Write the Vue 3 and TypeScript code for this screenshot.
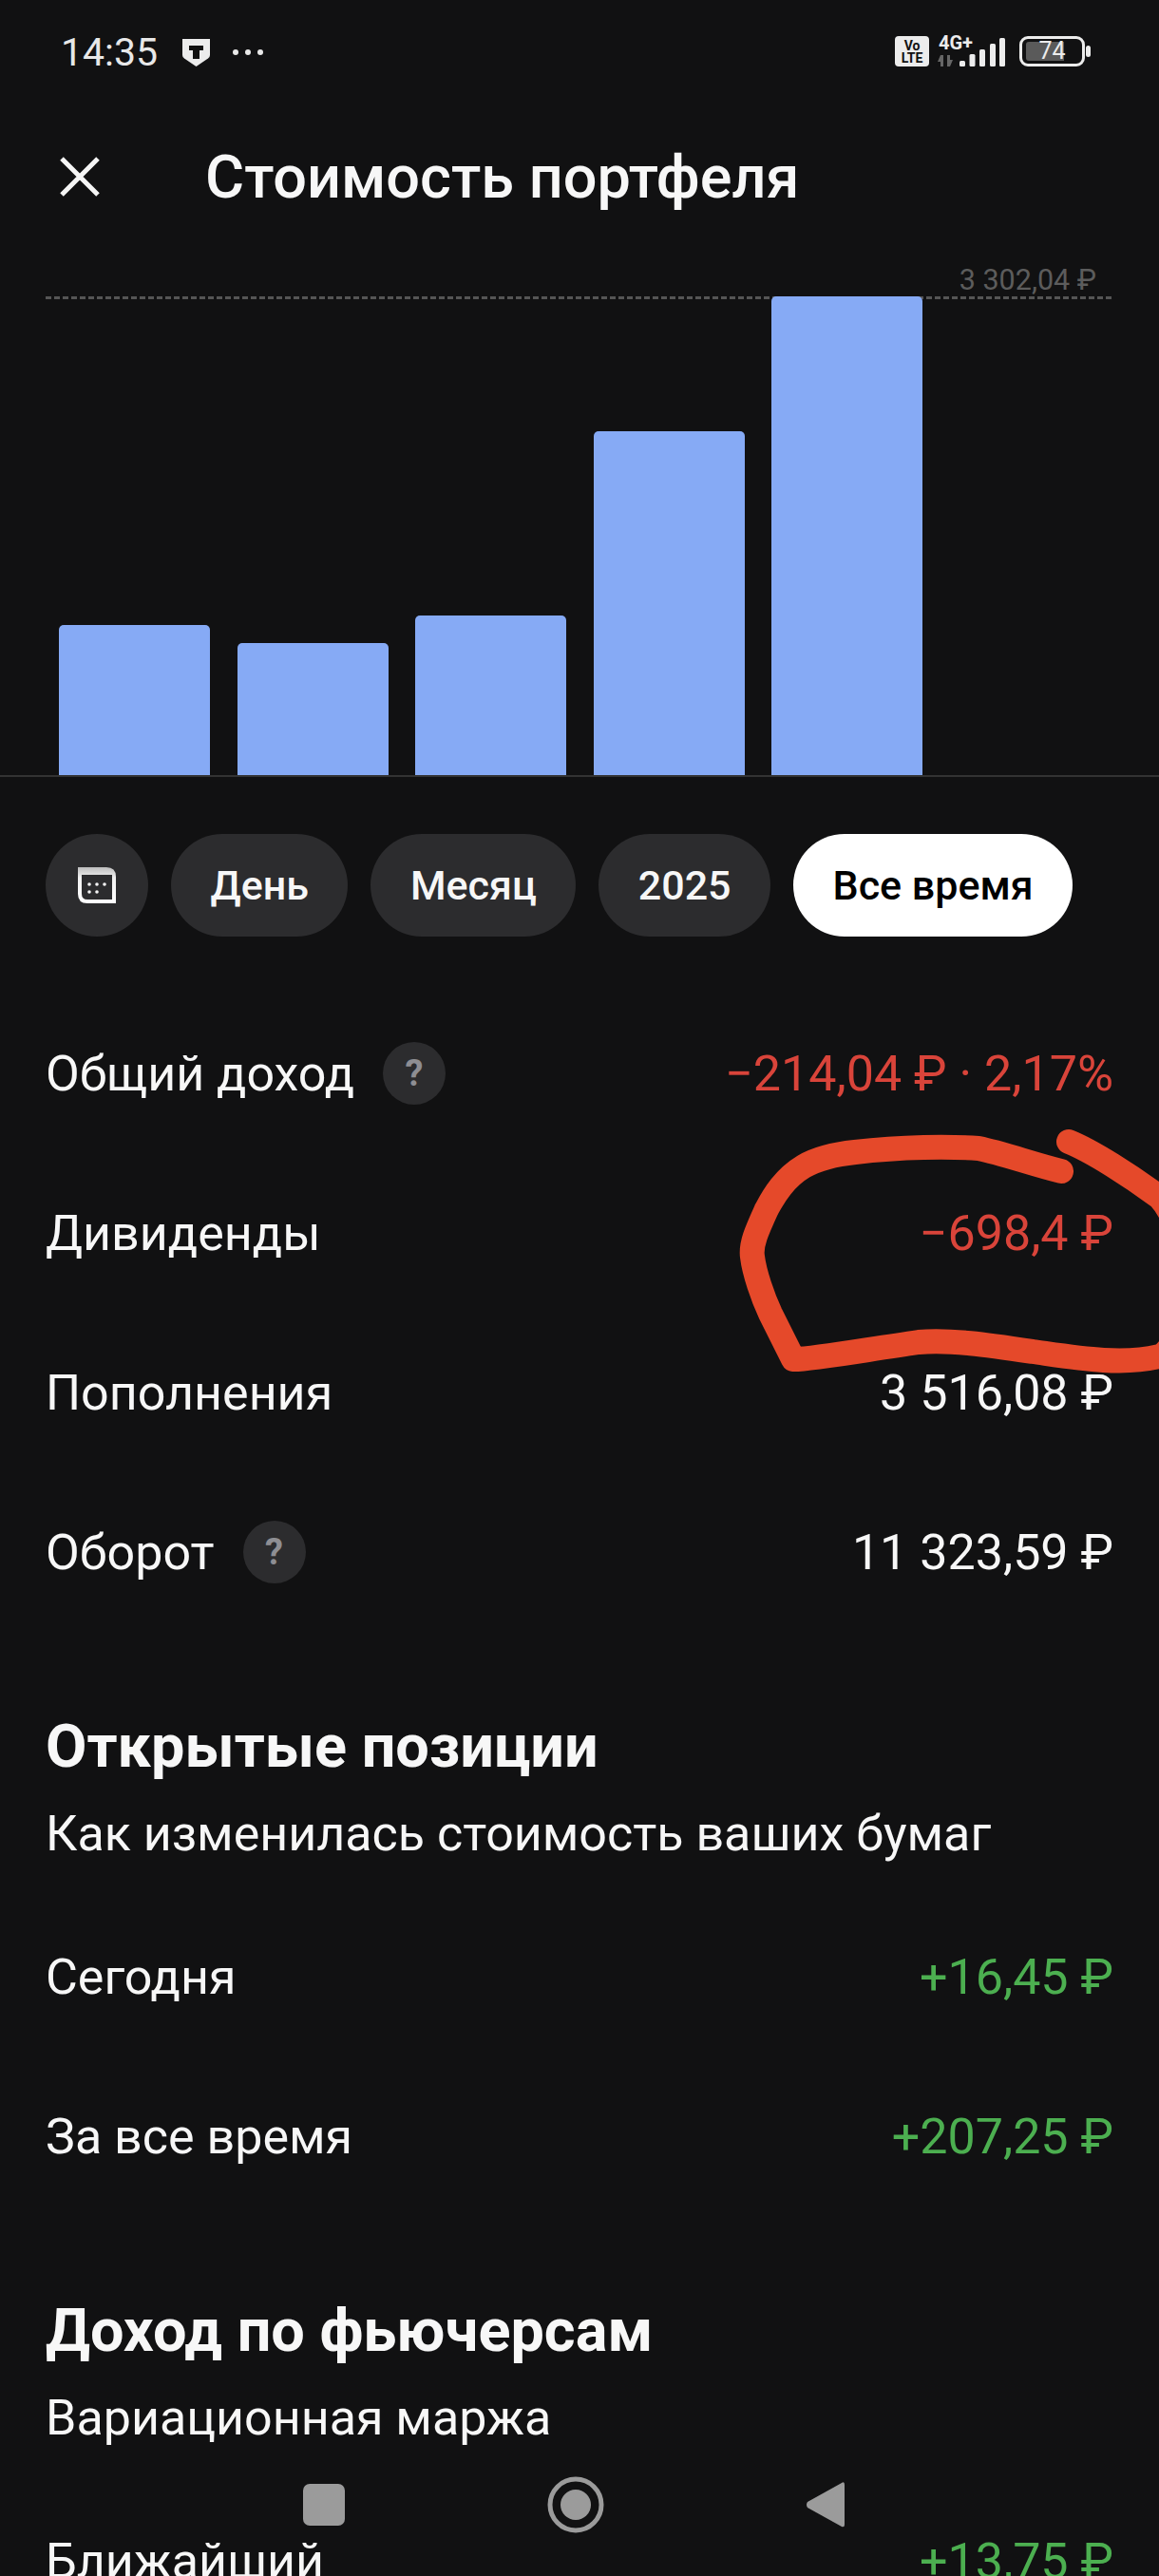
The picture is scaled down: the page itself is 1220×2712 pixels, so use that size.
<script setup lang="ts">
const bars = [
  { id: 1, height: 158 },
  { id: 2, height: 139 },
  { id: 3, height: 168 },
  { id: 4, height: 362 },
  { id: 5, height: 504 },
]

const periods = ['День', 'Месяц', '2025', 'Все время']

const totals = [
  { label: 'Общий доход', value: '−214,04 ₽ · 2,17%', tone: 'red', hint: true },
  { label: 'Дивиденды', value: '−698,4 ₽', tone: 'red', hint: false },
  { label: 'Пополнения', value: '3 516,08 ₽', tone: '', hint: false },
  { label: 'Оборот', value: '11 323,59 ₽', tone: '', hint: true },
]

const positions = [
  { label: 'Сегодня', value: '+16,45 ₽' },
  { label: 'За все время', value: '+207,25 ₽' },
]

const signalBars = [
  { x: 24, h: 6 },
  { x: 34.5, h: 13 },
  { x: 45, h: 18 },
  { x: 56, h: 24 },
  { x: 66, h: 30 },
]
</script>

<template>
  <div class="screen">
    <div class="status-bar">
      <div class="status-left">
        <span class="clock">14:35</span>
        <svg class="shield" width="29" height="29" viewBox="0 0 29 29">
          <path d="M0 0h29v17q0 2-2 3.5L14.5 29 2 20.5Q0 19 0 17z" fill="#ececec" />
          <path d="M7 7h15v5h-4v9h-7v-9H7z" fill="#111" />
        </svg>
        <span class="dots"><i></i><i></i><i></i></span>
      </div>
      <div class="status-right">
        <span class="volte">Vo<br />LTE</span>
        <div class="network">
          <span class="net-type">4G+</span>
          <svg class="signal" width="72" height="34" viewBox="0 0 72 34">
            <path d="M4 21h3v12H4v-5H1zM11 21h3v5h3l-3 7h-3z" fill="#666" />
            <rect
              v-for="b in signalBars"
              :key="b.x"
              :x="b.x"
              :y="33 - b.h"
              width="6"
              :height="b.h"
              rx="1.5"
              fill="#ececec"
            />
          </svg>
        </div>
        <div class="battery">
          <span class="battery-fill"></span>
          <span class="battery-text">74</span>
        </div>
        <span class="battery-nub"></span>
      </div>
    </div>

    <header class="top-bar">
      <svg class="close" width="44" height="44" viewBox="0 0 44 44">
        <path d="M3 3l38 38M41 3L3 41" stroke="#f5f5f5" stroke-width="5" fill="none" />
      </svg>
      <h1>Стоимость портфеля</h1>
    </header>

    <div class="chart">
      <span class="chart-max">3 302,04 ₽</span>
      <div class="chart-line"></div>
      <div class="bars">
        <div
          v-for="bar in bars"
          :key="bar.id"
          class="bar"
          :style="{ height: bar.height + 'px' }"
        ></div>
      </div>
    </div>

    <div class="chips">
      <button class="chip chip-icon" aria-label="Календарь">
        <svg width="40" height="38" viewBox="0 0 40 38">
          <defs>
            <linearGradient id="calTop" x1="0" y1="0" x2="0" y2="1">
              <stop offset="0" stop-color="#bdbdbd" />
              <stop offset="0.3" stop-color="#f2f2f2" />
              <stop offset="1" stop-color="#ffffff" />
            </linearGradient>
          </defs>
          <path
            d="M0 0H30Q40 0 40 10V38H10Q0 38 0 28ZM4 8V28Q4 34 10 34H36V8Z"
            fill="url(#calTop)"
            fill-rule="evenodd"
          />
          <g fill="#f5f5f5">
            <circle cx="12" cy="18" r="1.8" />
            <circle cx="20" cy="18" r="1.8" />
            <circle cx="28" cy="18" r="1.8" />
            <circle cx="12" cy="26" r="1.8" />
            <circle cx="20" cy="26" r="1.8" />
          </g>
        </svg>
      </button>
      <button
        v-for="(p, i) in periods"
        :key="p"
        class="chip"
        :class="{ active: i === periods.length - 1 }"
      >
        {{ p }}
      </button>
    </div>

    <section class="rows">
      <div v-for="row in totals" :key="row.label" class="row">
        <div class="row-label">
          <span>{{ row.label }}</span>
          <span v-if="row.hint" class="hint">?</span>
        </div>
        <span class="row-value" :class="row.tone">{{ row.value }}</span>
      </div>
    </section>

    <section class="block">
      <h2>Открытые позиции</h2>
      <p>Как изменилась стоимость ваших бумаг</p>
      <div v-for="row in positions" :key="row.label" class="row">
        <div class="row-label">{{ row.label }}</div>
        <span class="row-value green">{{ row.value }}</span>
      </div>
    </section>

    <section class="block">
      <h2>Доход по фьючерсам</h2>
      <p>Вариационная маржа</p>
      <div class="row">
        <div class="row-label">Ближайший</div>
        <span class="row-value green">+13,75 ₽</span>
      </div>
    </section>

    <svg class="scribble" width="1220" height="2712" viewBox="0 0 1220 2712">
      <path
        d="M1117 1233C1085 1225 1055 1214 1030 1209C1000 1207 950 1207 900 1213C880 1215 860 1220 846 1228C826 1240 815 1258 807 1273C797 1295 790 1310 792 1323C794 1340 803 1366 811 1383L835 1431C850 1432 905 1422 967 1413C1000 1410 1040 1416 1087 1423C1130 1429 1180 1438 1220 1428C1250 1420 1260 1300 1220 1260C1190 1238 1150 1212 1125 1202"
        fill="none"
        stroke="#e5492a"
        stroke-width="26"
        stroke-linecap="round"
        stroke-linejoin="round"
      />
    </svg>

    <div class="nav-bar">
      <svg width="44" height="44" viewBox="0 0 44 44">
        <rect width="44" height="44" rx="7" fill="#9b9b9b" />
      </svg>
      <svg width="60" height="60" viewBox="0 0 60 60">
        <circle cx="30" cy="30" r="27" fill="none" stroke="#9b9b9b" stroke-width="5" />
        <circle cx="30" cy="30" r="16" fill="#9b9b9b" />
      </svg>
      <svg width="42" height="50" viewBox="0 0 42 50">
        <path d="M38 2q3-2 3 2v42q0 3-3 2L2 28q-2-3 0-6z" fill="#9b9b9b" />
      </svg>
    </div>
  </div>
</template>

<style>
html,
body {
  margin: 0;
  background: #111112;
}
</style>

<style scoped>
.screen {
  position: relative;
  width: 1220px;
  height: 2712px;
  overflow: hidden;
  background: #111112;
  color: #f7f7f7;
  font-family: Roboto, "Noto Sans", sans-serif;
}
.status-bar {
  height: 110px;
  padding: 0 72px 0 64px;
  box-sizing: border-box;
  display: flex;
  align-items: center;
  justify-content: space-between;
}
.status-left {
  display: flex;
  align-items: center;
}
.clock {
  font-size: 41px;
  color: #e8e8e8;
}
.shield {
  margin-left: 26px;
}
.dots {
  display: flex;
  gap: 7px;
  margin-left: 24px;
}
.dots i {
  width: 6px;
  height: 6px;
  border-radius: 50%;
  background: #e8e8e8;
}
.status-right {
  display: flex;
  align-items: center;
  margin-top: -3px;
}
.volte {
  width: 36px;
  height: 32px;
  border-radius: 4px;
  background: #ececec;
  color: #111;
  font-size: 14px;
  line-height: 13px;
  font-weight: 700;
  text-align: center;
  padding-top: 4px;
  box-sizing: border-box;
}
.network {
  position: relative;
  width: 72px;
  height: 34px;
  margin-left: 8px;
}
.net-type {
  position: absolute;
  left: 2px;
  top: -2px;
  font-size: 20px;
  line-height: 20px;
  font-weight: 700;
  color: #ececec;
}
.signal {
  position: absolute;
  left: 0;
  top: 0;
}
.battery {
  position: relative;
  width: 69px;
  height: 32px;
  margin-left: 15px;
  border: 3px solid #ececec;
  border-radius: 9px;
  box-sizing: border-box;
  display: flex;
  align-items: center;
  justify-content: center;
}
.battery-fill {
  position: absolute;
  left: 4px;
  top: 3px;
  bottom: 3px;
  width: 40px;
  border-radius: 3px 0 0 3px;
  background: #5a5a5a;
}
.battery-text {
  position: relative;
  font-size: 25px;
  color: #ececec;
}
.battery-nub {
  width: 5px;
  height: 12px;
  margin-left: 1px;
  border-radius: 3px;
  background: #ececec;
}
.top-bar {
  height: 152px;
  display: flex;
  align-items: center;
  padding-left: 62px;
}
.top-bar h1 {
  margin: 0 0 0 110px;
  font-size: 63px;
  font-weight: 500;
}
.chart {
  position: relative;
  height: 556px;
  border-bottom: 2px solid #333;
  box-sizing: border-box;
  display: flex;
  align-items: flex-end;
}
.chart-max {
  position: absolute;
  right: 66px;
  top: 15px;
  font-size: 30.5px;
  color: #5c5c5c;
}
.chart-line {
  position: absolute;
  left: 48px;
  right: 50px;
  top: 50px;
  height: 3px;
  background: repeating-linear-gradient(90deg, #555 0 6px, transparent 6px 9px);
}
.bars {
  position: relative;
  display: flex;
  align-items: flex-end;
  gap: 28.5px;
  padding-left: 62px;
}
.bar {
  width: 159px;
  border-radius: 5px 5px 0 0;
  background: #86aaf5;
}
.chips {
  display: flex;
  gap: 24px;
  padding: 60px 0 0 48px;
}
.chip {
  height: 108px;
  padding: 0 41.5px;
  border: none;
  border-radius: 54px;
  background: #2c2c2e;
  color: #f7f7f7;
  font-family: inherit;
  font-size: 43px;
  font-weight: 500;
}
.chip.active {
  background: #fff;
  color: #000;
}
.chip-icon {
  width: 108px;
  padding: 0;
  display: flex;
  align-items: center;
  justify-content: center;
}
.rows {
  padding-top: 60px;
}
.row {
  height: 168px;
  padding: 0 48px;
  display: flex;
  align-items: center;
  justify-content: space-between;
  font-size: 52px;
}
.row-label {
  display: flex;
  align-items: center;
  gap: 30px;
}
.hint {
  width: 66px;
  height: 66px;
  border-radius: 50%;
  background: #2c2c2e;
  color: #8e8e93;
  font-size: 38px;
  font-weight: 700;
  display: flex;
  align-items: center;
  justify-content: center;
}
.red {
  color: #d9443a;
}
.green {
  color: #4caf50;
}
.block {
  padding-top: 87px;
}
.block h2 {
  margin: 0;
  padding: 0 48px;
  font-size: 63px;
  line-height: 68px;
  font-weight: 700;
}
.block p {
  margin: 28px 0 36px;
  padding: 0 48px;
  font-size: 52px;
  line-height: 60px;
}
.scribble {
  position: absolute;
  left: 0;
  top: 0;
  pointer-events: none;
}
.nav-bar {
  position: absolute;
  left: 319px;
  top: 2607px;
  width: 571px;
  height: 60px;
  display: flex;
  align-items: center;
  justify-content: space-between;
}
</style>
